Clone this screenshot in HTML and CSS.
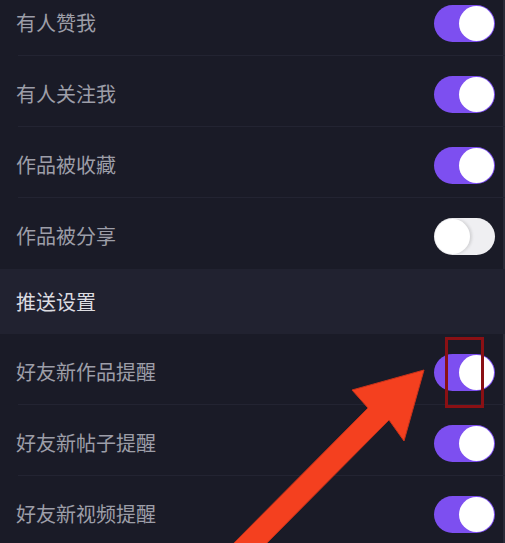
FILE: index.html
```html
<!DOCTYPE html>
<html lang="zh-CN">
<head>
<meta charset="utf-8">
<title>通知设置</title>
<link rel="stylesheet" href="styles.css">
</head>
<body>
<div class="page">
  <div class="list">
    <div class="row"><span class="label">有人赞我</span><span class="switch on"><span class="knob"></span></span></div>
    <div class="row"><span class="label">有人关注我</span><span class="switch on"><span class="knob"></span></span></div>
    <div class="row"><span class="label">作品被收藏</span><span class="switch on"><span class="knob"></span></span></div>
    <div class="row last"><span class="label">作品被分享</span><span class="switch off"><span class="knob"></span></span></div>
    <div class="section">推送设置</div>
    <div class="row"><span class="label">好友新作品提醒</span><span class="switch on"><span class="knob"></span></span></div>
    <div class="row"><span class="label">好友新帖子提醒</span><span class="switch on"><span class="knob"></span></span></div>
    <div class="row"><span class="label">好友新视频提醒</span><span class="switch on"><span class="knob"></span></span></div>
  </div>
  <div class="highlight"></div>
  <svg class="arrow" width="505" height="543" viewBox="0 0 505 543">
    <polygon points="424,370 352,390 368,408 224,553 257,553 389,420 404,441" fill="#f4401f" stroke="#c8321a" stroke-width="1" stroke-linejoin="round"/>
  </svg>
</div>
</body>
</html>
```
FILE: styles.css
```css
html, body {
  margin: 0;
  padding: 0;
  background: #1a1b27;
}
.page {
  position: relative;
  width: 505px;
  height: 543px;
  overflow: hidden;
  background: #1a1b27;
  font-family: "Noto Sans CJK SC", "Noto Sans", sans-serif;
  box-shadow: inset -2px 0 0 #2a2b38;
}
.list {
  margin-top: -15px;
  display: flex;
  flex-direction: column;
}
.row {
  position: relative;
  box-sizing: border-box;
  height: 71px;
  padding: 6px 10px 1px 16px;
  display: flex;
  align-items: center;
  justify-content: space-between;
}
.row::after {
  content: "";
  position: absolute;
  left: 18px;
  right: 0;
  bottom: 0;
  height: 1px;
  background: #232432;
}
.row.last::after {
  display: none;
}
.label {
  font-size: 20px;
  color: #9d9ea8;
  line-height: 1;
}
.section {
  box-sizing: border-box;
  height: 65px;
  padding-left: 16px;
  display: flex;
  align-items: center;
  background: #212230;
  font-size: 20px;
  color: #dcdce0;
}
.switch {
  position: relative;
  width: 61px;
  height: 37px;
  border-radius: 19px;
  flex: none;
}
.switch.on {
  background: #7d4ff0;
}
.switch.off {
  background: #efeff2;
}
.knob {
  position: absolute;
  top: 1px;
  width: 35px;
  height: 35px;
  border-radius: 50%;
  background: #ffffff;
}
.switch.on .knob {
  right: 1px;
}
.switch.off .knob {
  left: 1px;
  box-shadow: 2px 0 3px rgba(0, 0, 0, 0.12);
}
.highlight {
  position: absolute;
  left: 445px;
  top: 337px;
  width: 39px;
  height: 71px;
  box-sizing: border-box;
  border: 3px solid #8a1014;
}
.arrow {
  position: absolute;
  left: 0;
  top: 0;
}
```
